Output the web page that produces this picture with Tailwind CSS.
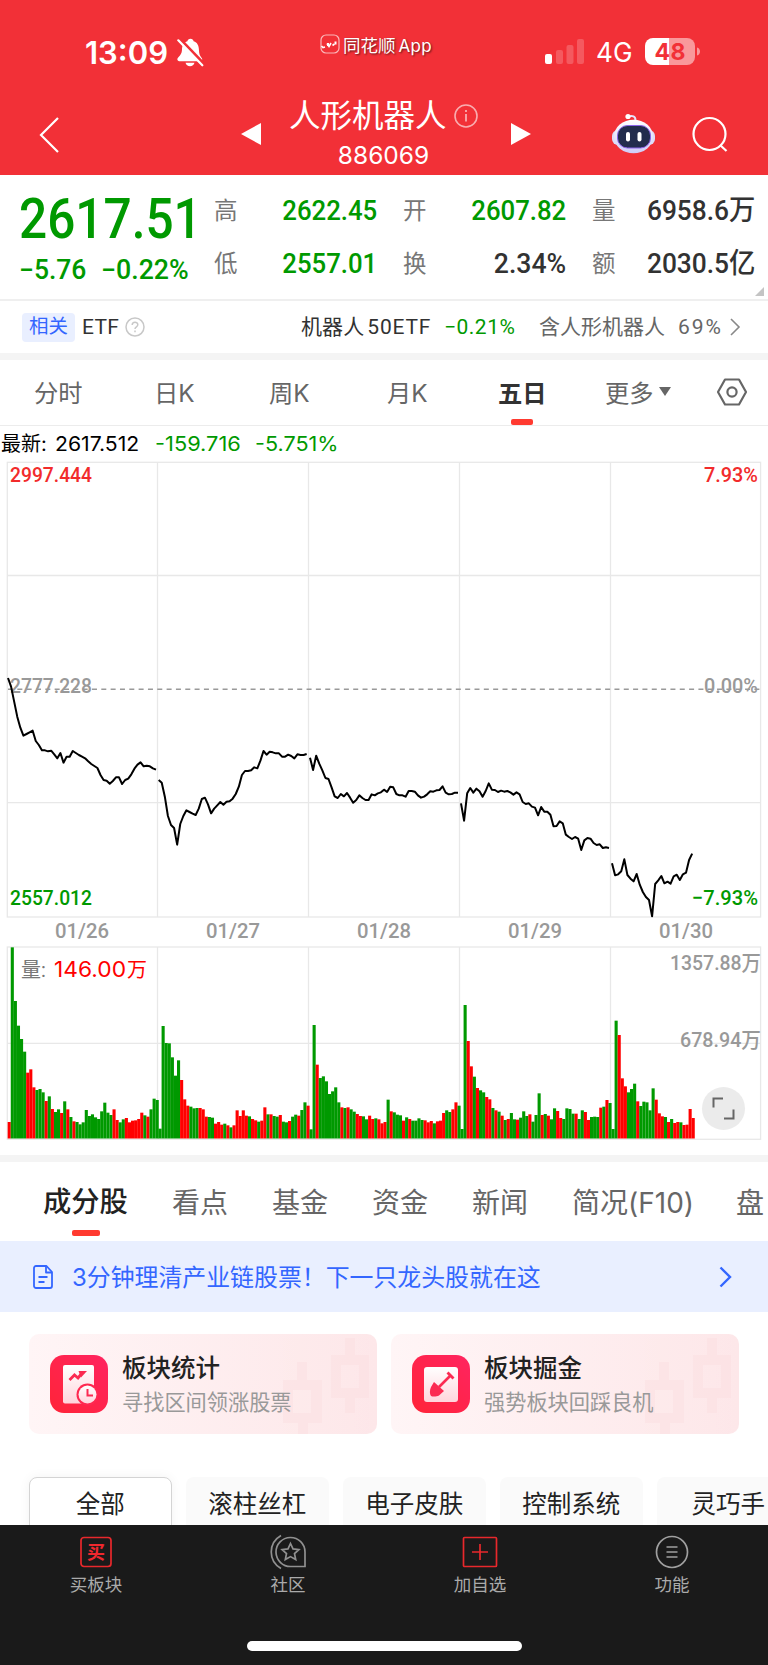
<!DOCTYPE html>
<html lang="zh-CN">
<head>
    <meta charset="UTF-8">
    <meta name="viewport" content="width=device-width, initial-scale=1.0">
    <title>人形机器人 886069</title>

    <script src="https://cdn.jsdelivr.net/npm/@tailwindcss/browser@4"></script>

    <style>
        body { font-family: Inter, 'Noto Sans CJK SC', sans-serif; }
        .din { font-family: Roboto, 'Noto Sans CJK SC', sans-serif; }
    </style>
</head>

<body class="bg-white">
    <div class="w-[768px] h-[1665px] overflow-hidden flex flex-col whitespace-nowrap text-[#323232]">
        <header class="h-[174.500px] shrink-0 bg-[#f23037] text-white">
            <!-- phone status bar -->
            <div class="h-[90px] pt-[32px] flex items-start">
                <div class="ml-[85px] w-[92px] h-[42px] leading-[42px] text-[31px] font-semibold origin-left">13:09</div>
                <svg class="mt-[6px]" width="27" height="29" viewBox="0 0 27 29">
                    <path d="M13.500.8c1.800 0 2.800 1 3.100 2.400 3.800 1.200 5.200 4.400 5.300 8.300.1 4.500 1.100 6.500 2.600 8.200 1.400 1.600.6 3.500-1.300 3.500H2.300c-1.900 0-2.600-2-1.300-3.500 1.700-1.900 3.900-3.700 4-8.200.1-3.900 1.600-7.100 5.400-8.300C10.700 1.800 11.700.8 13.500.8z" fill="#fff"/>
                    <path d="M8.500 24.800h9c-.6 2-2.300 3.400-4.500 3.400s-3.900-1.400-4.500-3.400z" fill="#fff"/>
                    <path d="M2.500.5l24.500 25.500" stroke="#f23037" stroke-width="3"/>
                    <path d="M1.300 2.300l24 25" stroke="#fff" stroke-width="2.200" stroke-linecap="round"/>
                </svg>
                <div class="ml-[116px] mt-[2px] w-[225px] flex items-start">
                    <svg class="mr-[3px]" width="20" height="20" viewBox="0 0 20 20" fill="none" stroke="#fff">
                        <rect x="1" y="1" width="18" height="18" rx="5" stroke-opacity=".65" stroke-width="1.200"/>
                        <path d="M1.500 12l1.500 1.500L5 13M7 9.500l2 3 2-3.500M12.500 11.500l2-1.500" stroke-width="1.600"/>
                        <path d="M8 9v3M15.500 7.500v3" stroke-width="2"/>
                    </svg>
                    <span class="text-[17.500px] leading-[24px] [text-shadow:1px_1px_2px_rgba(0,0,0,0.6)]">同花顺<span class="ml-[3px] text-[17px] tracking-[0.3px]">App</span></span>
                </div>
                <svg class="mt-[7px]" width="40" height="26" viewBox="0 0 40 26" fill="#fff">
                    <rect x="0" y="15" width="7" height="10" rx="2"/>
                    <rect x="11" y="11" width="7" height="14" rx="2" opacity=".2"/>
                    <rect x="21.500" y="6" width="7" height="19" rx="2" opacity=".2"/>
                    <rect x="32" y="0" width="7" height="25" rx="2" opacity=".2"/>
                </svg>
                <div class="ml-[11px] w-[48px] h-[42px] leading-[42px] text-[27px] origin-left scale-x-[0.97]">4G</div>
                <svg class="mt-[5px]" width="57" height="29" viewBox="0 0 57 29">
                    <path d="M25 1H9a8 8 0 0 0-8 8v11a8 8 0 0 0 8 8h16z" fill="#fff"/>
                    <path d="M25 1h18a8 8 0 0 1 8 8v11a8 8 0 0 1-8 8H25z" fill="#fff" opacity=".5"/>
                    <path d="M53 10.500c4 1 4 7 0 8z" fill="#fff" opacity=".5"/>
                    <text x="26" y="22.500" text-anchor="middle" font-size="23" font-weight="700" fill="#f23037" textLength="31">48</text>
                </svg>
            </div>

            <!-- title bar -->
            <div class="h-[84px] flex items-start">
                <svg class="ml-[38px] mt-[26px]" width="22" height="38" viewBox="0 0 22 38" fill="none" stroke="#fff" stroke-width="2.200"><path d="M20 2L3 19l17 17"/></svg>
                <svg class="ml-[181px] mt-[33px]" width="20" height="22" viewBox="0 0 20 22" fill="#fff"><path d="M0 11L20 0v22z"/></svg>
                <div class="w-[249px] flex flex-col items-center relative">
                    <div class="mt-[6px] mr-[30px] h-[40px] flex items-center justify-end text-[31.500px] leading-[40px] w-[152px]">
                        <span>人形机器人</span>
                    </div>
                    <svg class="absolute left-[193px] top-[14px]" width="24" height="24" viewBox="0 0 24 24" fill="none" stroke="#fff" opacity=".6">
                        <circle cx="12" cy="12" r="11" stroke-width="1.600"/>
                        <path d="M12 10v7.500M12 6v2" stroke-width="1.800"/>
                    </svg>
                    <div class="mt-[3px] leading-[32px] text-[24.500px] mr-[4px]">886069</div>
                </div>
                <svg class="ml-px mt-[33px]" width="20" height="22" viewBox="0 0 20 22" fill="#fff"><path d="M20 11L0 0v22z"/></svg>
                <svg class="ml-[80px] mt-[23px]" width="46" height="42" viewBox="0 0 46 42">
                    <defs>
                        <linearGradient id="head" x1="0" y1="0" x2="0" y2="1"><stop offset="0" stop-color="#fff"/><stop offset="1" stop-color="#cfcbf7"/></linearGradient>
                    </defs>
                    <path d="M17.500 3.500c4-1 7-.5 7 4" fill="none" stroke="#e6e4fb" stroke-width="2"/>
                    <circle cx="17" cy="3.500" r="2.600" fill="#fff"/>
                    <rect x="1" y="17" width="43" height="15" rx="6" fill="#dddcf8"/>
                    <ellipse cx="22.500" cy="23.500" rx="19.500" ry="16.800" fill="url(#head)"/>
                    <rect x="6.500" y="12.500" width="33" height="22.500" rx="10" fill="#222c4c" stroke="#8a62e8" stroke-width="1"/>
                    <rect x="15" y="19" width="4" height="9.500" rx="2" fill="#fff"/>
                    <rect x="26.500" y="19" width="4" height="9.500" rx="2" fill="#fff"/>
                </svg>
                <svg class="ml-[34px] mt-[26px]" width="38" height="38" viewBox="0 0 38 38" fill="none" stroke="#fff" stroke-width="2.200"><circle cx="18.500" cy="18" r="16"/><path d="M29 29l6.500 6"/></svg>
            </div>
        </header>

        <!-- quote -->
        <section class="din relative h-[126.500px] shrink-0 border-b-2 border-[#efefef] pl-[20px] flex font-medium">
            <div class="w-[194px] text-[#009900]">
                <div class="mt-[14px] -ml-px h-[60px] leading-[60px] text-[56px] origin-left scale-x-[0.885]">2617.51</div>
                <div class="mt-[6px] -ml-px h-[30px] leading-[30px] text-[27px] flex">
                    <span class="w-[82px] origin-left scale-x-[0.98]">−5.76</span>
                    <span class="origin-left scale-x-[0.99]">−0.22%</span>
                </div>
            </div>
            <div class="w-[541px] mt-[16px] grid grid-cols-3 content-start gap-x-[26px] gap-y-[13px] text-[28px] leading-[40px]">
                <div class="flex justify-between items-center h-[40px]"><span class="text-[23.500px] font-normal text-[#777]">高</span><span class="text-[#009900] origin-right scale-x-[0.92]">2622.45</span></div>
                <div class="flex justify-between items-center h-[40px]"><span class="text-[23.500px] font-normal text-[#777]">开</span><span class="text-[#009900] origin-right scale-x-[0.92]">2607.82</span></div>
                <div class="flex justify-between items-center h-[40px]"><span class="text-[23.500px] font-normal text-[#777]">量</span><span class="origin-right scale-x-[0.94]">6958.6万</span></div>
                <div class="flex justify-between items-center h-[40px]"><span class="text-[23.500px] font-normal text-[#777]">低</span><span class="text-[#009900] origin-right scale-x-[0.92]">2557.01</span></div>
                <div class="flex justify-between items-center h-[40px]"><span class="text-[23.500px] font-normal text-[#777]">换</span><span class="origin-right scale-x-[0.95]">2.34%</span></div>
                <div class="flex justify-between items-center h-[40px]"><span class="text-[23.500px] font-normal text-[#777]">额</span><span class="origin-right scale-x-[0.94]">2030.5亿</span></div>
            </div>
            <svg class="absolute right-[4px] bottom-[3px]" width="9" height="9" viewBox="0 0 9 9" fill="#c4c4c4"><path d="M9 0v9H0z"/></svg>
        </section>

        <section class="din h-[52px] shrink-0 flex items-center text-[21px]">
            <span class="ml-[22px] w-[53px] h-[29px] leading-[28px] rounded bg-[#e9efff] text-[#3366ff] text-[19.500px] text-center">相关</span>
            <span class="ml-[7px] mt-px w-[43px] tracking-[0.3px]">ETF</span>
            <svg width="20" height="20" viewBox="0 0 20 20" fill="none" stroke="#c8c8c8" stroke-width="1.500">
                <circle cx="10" cy="10" r="9"/>
                <path d="M7.200 8c0-3.600 5.600-3.600 5.600-.2 0 2-2.800 2-2.800 4.200M10 13.600v1.600"/>
            </svg>
            <span class="ml-[156px] mt-px w-[143px] tracking-[0.1px]">机器人<span class="ml-[3px] tracking-[0.8px]">50ETF</span></span>
            <span class="mt-px w-[95px] text-[#009900] tracking-[0.5px]">−0.21%</span>
            <span class="mt-px w-[139px] text-[#666]">含人形机器人</span>
            <span class="mt-px w-[52px] text-[#666] tracking-[2px]">69%</span>
            <svg width="11" height="18" viewBox="0 0 11 18" fill="none" stroke="#888" stroke-width="1.600"><path d="M1 1l8 8-8 8"/></svg>
        </section>

        <div class="h-[7px] shrink-0 bg-[#f4f4f4]"></div>

        <!-- period tabs -->
        <nav class="relative h-[66px] pt-[2px] shrink-0 border-b border-[#ececec] flex items-center text-[24.300px] text-[#666]">
            <span class="ml-[34px] w-[120px]">分时</span>
            <span class="w-[115px]">日K</span>
            <span class="w-[118px]">周K</span>
            <span class="w-[111px]">月K</span>
            <span class="w-[107px] font-bold text-[#323232]">五日</span>
            <span class="w-[54px]">更多</span>
            <svg class="mr-[46px] -mt-[4px]" width="12" height="9" viewBox="0 0 12 9" fill="#666"><path d="M0 0h12L6 9z"/></svg>
            <svg class="-mt-[3px]" width="30" height="28" viewBox="0 0 30 28" fill="none" stroke="#666" stroke-width="2.200" stroke-linejoin="round"><path d="M8 1.500h14L29 14l-7 12.500H8L1 14z"/><circle cx="15" cy="14" r="4.600"/></svg>
            <i class="absolute left-[511px] bottom-0 w-[22px] h-[6px] rounded-[2px] bg-[#ff3a30]"></i>
        </nav>

        <div class="h-[35px] shrink-0 pl-px flex items-center text-[20px] text-black">
            <span class="w-[54px]">最新:</span>
            <span class="w-[100px] origin-left scale-x-[1.06]">2617.512</span>
            <span class="w-[100px] text-[#009900] origin-left scale-x-[1.09]">-159.716</span>
            <span class="text-[#009900] origin-left scale-x-[1.08]">-5.751%</span>
        </div>

        <!-- five-day chart: price line above, volume bars below -->
        <div class="relative h-[694px] shrink-0">
            <svg id="chart" class="din block" width="768" height="694" viewBox="0 461 768 694" font-size="21">
                <g fill="none" stroke="#e8e8e8" stroke-width="1.300">
                    <rect x="7.300" y="462.300" width="753.300" height="454.700"/>
                    <path d="M7 575.500h754M7 802.700h754"/>
                    <path d="M157.500 462v455M308.500 462v455M459.500 462v455M610.500 462v455"/>
                    <rect x="7.300" y="947" width="753.300" height="192.300"/>
                    <path d="M7 1043.300h754"/>
                    <path d="M157.500 947v192M308.500 947v192M459.500 947v192M610.500 947v192"/>
                </g>
                <path d="M8 689.200h753" stroke="#999" stroke-width="1.500" stroke-dasharray="5 4.330"/>
                <g font-weight="500">
                    <text x="10" y="482" fill="#f22b2b" textLength="82" lengthAdjust="spacingAndGlyphs">2997.444</text>
                    <text x="704" y="482" fill="#f22b2b" textLength="54" lengthAdjust="spacingAndGlyphs">7.93%</text>
                    <text x="10" y="693" fill="#999" textLength="82" lengthAdjust="spacingAndGlyphs">2777.228</text>
                    <text x="704" y="693" fill="#999" textLength="54" lengthAdjust="spacingAndGlyphs">0.00%</text>
                    <text x="10" y="904.500" fill="#009900" textLength="82" lengthAdjust="spacingAndGlyphs">2557.012</text>
                    <text x="692" y="904.500" fill="#009900" textLength="66" lengthAdjust="spacingAndGlyphs">−7.93%</text>
                    <g fill="#999">
                        <text x="55" y="938" textLength="54" lengthAdjust="spacingAndGlyphs">01/26</text>
                        <text x="206" y="938" textLength="54" lengthAdjust="spacingAndGlyphs">01/27</text>
                        <text x="357" y="938" textLength="54" lengthAdjust="spacingAndGlyphs">01/28</text>
                        <text x="508" y="938" textLength="54" lengthAdjust="spacingAndGlyphs">01/29</text>
                        <text x="659" y="938" textLength="54" lengthAdjust="spacingAndGlyphs">01/30</text>
                    </g>
                </g>
                <g id="lines" fill="none" stroke="#000" stroke-width="2" stroke-linejoin="round"></g>
                <g id="bars"></g>
                <text x="21" y="977" fill="#777" font-size="20">量:</text>
                <text x="54" y="977" fill="#ff0000" font-size="21.500" textLength="72" lengthAdjust="spacingAndGlyphs" style="font-family: Inter, sans-serif">146.00</text>
                <text x="127" y="977" fill="#ff0000" font-size="20">万</text>
                <text x="670" y="970" fill="#999" font-weight="500" textLength="91" lengthAdjust="spacingAndGlyphs">1357.88万</text>
                <text x="680" y="1047" fill="#999" font-weight="500" textLength="81" lengthAdjust="spacingAndGlyphs">678.94万</text>
            </svg>
            <button class="absolute left-[701.500px] top-[625.500px] w-[43px] h-[43px] rounded-full bg-[#ebebeb]">
                <svg width="43" height="43" viewBox="0 0 43 43" fill="none" stroke="#666" stroke-width="2"><path d="M11.500 20.500v-9H21M22 31.500h9.500v-9"/></svg>
            </button>
        </div>

        <div class="h-[7px] shrink-0 bg-[#f4f4f4]"></div>

        <!-- section tabs -->
        <nav class="relative h-[79px] pt-[2px] shrink-0 flex items-center text-[28px] text-[#666]">
            <span class="ml-[43px] w-[129px] font-medium text-[28.300px] text-[#222]">成分股</span>
            <span class="w-[100px]">看点</span>
            <span class="w-[100px]">基金</span>
            <span class="w-[100px]">资金</span>
            <span class="w-[100px]">新闻</span>
            <span class="w-[164px] origin-left">简况(F10)</span>
            <span>盘</span>
            <i class="absolute left-[72px] bottom-[5px] w-[28px] h-[6px] rounded-[2px] bg-[#ff3a30]"></i>
        </nav>

        <div class="h-[71px] shrink-0 bg-[#e9efff] text-[#3366ff] flex items-center">
            <svg class="ml-[33px]" width="20" height="24" viewBox="0 0 20 24" fill="none" stroke="#3366ff" stroke-width="1.800" stroke-linejoin="round">
                <path d="M3 1h10.500L19 7v14a2 2 0 0 1-2 2H3a2 2 0 0 1-2-2V3a2 2 0 0 1 2-2z"/>
                <path d="M13 1v6.500h6M5.500 12h9M5.500 17h6"/>
            </svg>
            <span class="ml-[19px] mt-[2px] w-[647px] text-[23.900px]">3分钟理清产业链股票！下一只龙头股就在这</span>
            <svg width="13" height="22" viewBox="0 0 13 22" fill="none" stroke="#3366ff" stroke-width="2.400"><path d="M1.500 1.500L11 11l-9.500 9.500"/></svg>
        </div>

        <!-- tool cards -->
        <div class="mt-[21.500px] px-[29px] h-[100.500px] shrink-0 grid grid-cols-2 gap-[14px]">
            <div class="relative overflow-hidden rounded-[10px] bg-linear-to-r from-[#fff5f6] to-[#fde7e9] flex">
                <svg class="absolute right-0 top-0" width="100" height="101" viewBox="0 0 100 101" fill="#fadcdf" opacity=".4">
                    <path d="M68 4h10v17h14v43H78v15H68V64H54V21h14zm-4 27v23h18V31z" fill-rule="evenodd"/>
                    <path d="M20 28h10v18h15v43H31v12H21V89H6V46h14zm-4 28v23h18V56z" fill-rule="evenodd"/>
                </svg>
                <svg class="ml-[21px] mt-[21px]" width="58" height="58" viewBox="0 0 58 58">
                    <defs>
                        <linearGradient id="tile" x1="1" y1="0" x2="0" y2="1"><stop offset="0" stop-color="#ff2460"/><stop offset="1" stop-color="#ff2438"/></linearGradient>
                        <linearGradient id="sheet" x1="0" y1="0" x2="0" y2="1"><stop offset="0" stop-color="#fff"/><stop offset="1" stop-color="#ffd5dc"/></linearGradient>
                    </defs>
                    <rect width="58" height="58" rx="14" fill="url(#tile)"/>
                    <rect x="13" y="10" width="31" height="38.500" rx="2" fill="url(#sheet)"/>
                    <path d="M19.500 25l5-5 3.500 3 4.500-5.500" fill="none" stroke="#fb2b52" stroke-width="2.800"/>
                    <path d="M28.500 16h8.500l-6 6.500z" fill="#fb2b52"/>
                    <circle cx="37.500" cy="39.500" r="11" fill="#ff2850"/>
                    <circle cx="37.500" cy="39.500" r="9" fill="url(#sheet)"/>
                    <path d="M37.500 34v6.500h5.500" fill="none" stroke="#fb2b52" stroke-width="2"/>
                </svg>
                <div class="relative ml-[14px] mt-[16.500px]">
                    <div class="h-[36px] leading-[36px] text-[24.500px] font-medium text-[#222]">板块统计</div>
                    <div class="h-[32px] leading-[32px] text-[21.200px] text-[#999]">寻找区间领涨股票</div>
                </div>
            </div>
            <div class="relative overflow-hidden rounded-[10px] bg-linear-to-r from-[#fff5f6] to-[#fde7e9] flex">
                <svg class="absolute right-0 top-0" width="100" height="101" viewBox="0 0 100 101" fill="#fadcdf" opacity=".4">
                    <path d="M68 4h10v17h14v43H78v15H68V64H54V21h14zm-4 27v23h18V31z" fill-rule="evenodd"/>
                    <path d="M20 28h10v18h15v43H31v12H21V89H6V46h14zm-4 28v23h18V56z" fill-rule="evenodd"/>
                </svg>
                <svg class="ml-[21px] mt-[21px]" width="58" height="58" viewBox="0 0 58 58">
                    <rect width="58" height="58" rx="14" fill="url(#tile)"/>
                    <rect x="12" y="12" width="34" height="35" rx="3" fill="url(#sheet)"/>
                    <path d="M27 32L39 20" stroke="#fb2b52" stroke-width="2.600"/>
                    <path d="M35.500 17.500l6 6" stroke="#fb2b52" stroke-width="2.800"/>
                    <path d="M22 27l10 9-5 4.500c-2 1-6 1.500-8 .5-1.500-2-1.500-6 0-9z" fill="#fb2b52"/>
                </svg>
                <div class="relative ml-[14px] mt-[16.500px]">
                    <div class="h-[36px] leading-[36px] text-[24.500px] font-medium text-[#222]">板块掘金</div>
                    <div class="h-[32px] leading-[32px] text-[21.200px] text-[#999]">强势板块回踩良机</div>
                </div>
            </div>
        </div>

        <!-- concept filter -->
        <div class="mt-[43px] h-[48px] shrink-0 pl-[29px] flex gap-[14.500px] text-[24.500px] leading-[54px] text-center text-[#222]">
            <span class="w-[142.500px] h-[60px] shrink-0 rounded-[8px] border border-[#d4d4d4] bg-white leading-[52px] shadow-[0_0_12px_rgba(0,0,0,0.05)]">全部</span>
            <span class="w-[142.500px] h-[60px] shrink-0 rounded-[8px] bg-[#fafafa]">滚柱丝杠</span>
            <span class="w-[142.500px] h-[60px] shrink-0 rounded-[8px] bg-[#fafafa]">电子皮肤</span>
            <span class="w-[142.500px] h-[60px] shrink-0 rounded-[8px] bg-[#fafafa]">控制系统</span>
            <span class="w-[142.500px] h-[60px] shrink-0 rounded-[8px] bg-[#fafafa]">灵巧手</span>
        </div>

        <footer class="relative h-[140px] shrink-0 bg-[#1a1a1a] text-[#aaa] text-[17.500px]">
            <div class="h-[116px] pt-[9px] grid grid-cols-4">
                <div class="flex flex-col items-center">
                    <svg width="36" height="36" viewBox="0 0 36 36">
                        <rect x="3" y="3.500" width="30" height="29" rx="3" fill="none" stroke="#e8282c" stroke-width="1.700"/>
                        <text x="18" y="25" text-anchor="middle" font-size="18" font-weight="700" fill="#f0282e">买</text>
                    </svg>
                    <span class="leading-[30px]">买板块</span>
                </div>
                <div class="flex flex-col items-center">
                    <svg width="38" height="36" viewBox="0 0 38 36" fill="none" stroke="#909090" stroke-width="1.700">
                        <path d="M36 18v14.500H22a14.500 14.500 0 1 1 14-14.500z"/>
                        <path d="M12 1.500C-1 9-1 27 12 34.500"/>
                        <path d="M21.500 9.500l2.500 5.400 5.900.7-4.400 4 1.200 5.900-5.200-2.900-5.200 2.900 1.200-5.900-4.400-4 5.900-.7z"/>
                    </svg>
                    <span class="leading-[30px]">社区</span>
                </div>
                <div class="flex flex-col items-center">
                    <svg width="36" height="36" viewBox="0 0 36 36" fill="none" stroke="#e8282c" stroke-width="1.700"><rect x="1.500" y="3.500" width="33" height="29" rx="1"/><path d="M10 18h16M18 10v16"/></svg>
                    <span class="leading-[30px]">加自选</span>
                </div>
                <div class="flex flex-col items-center">
                    <svg width="36" height="36" viewBox="0 0 36 36" fill="none" stroke="#a0a0a0" stroke-width="1.700"><circle cx="18" cy="18" r="15.500"/><path d="M12.500 13h11M12.500 18h11M12.500 23h11"/></svg>
                    <span class="leading-[30px]">功能</span>
                </div>
            </div>
            <div class="mx-auto w-[275px] h-[10px] rounded-full bg-white"></div>
        </footer>
    </div>

    <script>
        // price samples per day, in thirds of a pixel below y = 660 //
        const prices = [
            { x: 24, y: [54,80,125,170,203,227,222,217,212,243,255,271,271,274,272,283,295,279,308,290,290,273,279,285,290,295,304,312,318,324,345,360,362,371,363,352,352,372,360,356,343,326,314,307,319,317,319,325,329] },
            { x: 476, y: [360,368,410,468,495,504,554,492,468,451,456,461,465,446,417,413,433,460,446,436,426,434,425,424,416,402,380,345,333,333,331,322,325,302,273,284,275,277,280,280,290,290,284,288,295,283,285,285,282] },
            { x: 930, y: [293,330,287,311,331,354,357,382,409,414,402,409,399,413,428,420,406,414,420,420,403,406,400,397,389,396,380,382,402,406,406,410,393,393,395,406,413,410,403,394,395,391,390,379,398,403,402,398,398] },
            { x: 1383, y: [430,482,400,384,398,386,394,410,393,370,389,390,396,392,395,393,397,404,397,403,426,432,430,440,443,466,441,455,455,464,499,498,484,490,524,531,537,531,536,570,541,534,536,549,555,553,564,562,564] },
            { x: 1836, y: [610,646,643,634,598,645,656,664,642,674,696,711,720,769,672,661,648,670,665,671,649,644,660,643,638,600,581] },
        ];

        // volume bars: colour and top edge, in thirds of a pixel below y = 940 //
        const volumes = [
            { x: 23, v: "R546 G22 G183 G257 G297 G335 R398 R388 R442 G450 G447 G457 R483 G469 R507 G516 G508 R519 G484 R508 G531 R544 G546 G553 G547 G510 G528 G523 G532 G537 G514 G488 G518 G525 R508 R540 G547 G538 R534 R547 R542 R541 R537 R518 G526 R530 G508 G476 G480" },
            { x: 475.5, v: "G566 G258 G309 G310 G352 G407 G361 R420 R478 R497 G500 G505 G504 R504 R508 R530 G531 G533 R551 R546 R554 G551 R556 G562 R556 R511 R528 R511 R527 G529 R537 R541 G545 R542 R502 G523 R523 G528 G530 R525 G545 G547 R543 G530 G524 R527 G510 G487 R497" },
            { x: 928.5, v: "G568 G255 R374 G414 G409 G424 G462 G454 G442 G487 R502 G504 R502 G508 G515 R522 R528 G529 G538 R527 R537 G535 R538 R550 R546 G479 R514 G517 G524 G526 R542 G532 R537 G542 G542 G535 G540 R541 R547 R543 G550 R544 R542 R519 G511 G516 R508 R487 G497" },
            { x: 1381.5, v: "G567 G195 R303 R379 G410 R444 G451 G457 R471 R478 G504 R511 G515 R527 G540 R537 G519 G538 R539 G533 G514 G528 R523 G545 G525 G460 R525 G522 R527 G538 G505 R513 R534 G537 G505 G507 G521 R521 G537 G511 R516 R540 G531 G530 G531 R503 G500 R480 G489" },
            { x: 1834.5, v: "G567 G242 R285 R415 R439 G457 G447 G431 R484 G498 G485 G487 G511 G445 R479 R520 R529 G531 R546 G537 R549 R546 G547 R555 R554 R507 R534" },
        ];

        const ns = "http://www.w3.org/2000/svg", step = 9.25;

        function add(parent, tag, attrs) {
            const el = document.createElementNS(ns, tag);
            for (const key in attrs) el.setAttribute(key, attrs[key]);
            parent.appendChild(el);
        }

        prices.forEach(day => {
            const points = day.y.map((y, i) => ((day.x + i * step) / 3).toFixed(2) + "," + (660 + y / 3).toFixed(2));
            add(document.querySelector("#lines"), "polyline", { points: points.join(" ") });
        });

        volumes.forEach(day => {
            day.v.split(" ").forEach((bar, i) => {
                const top = 940 + bar.slice(1) / 3;
                add(document.querySelector("#bars"), "rect", {
                    x: (day.x + i * step) / 3, y: top, width: 3.1, height: 1138.5 - top,
                    fill: bar[0] == "R" ? "#ff0000" : "#009900"
                });
            });
        });
    </script>
</body>
</html>
